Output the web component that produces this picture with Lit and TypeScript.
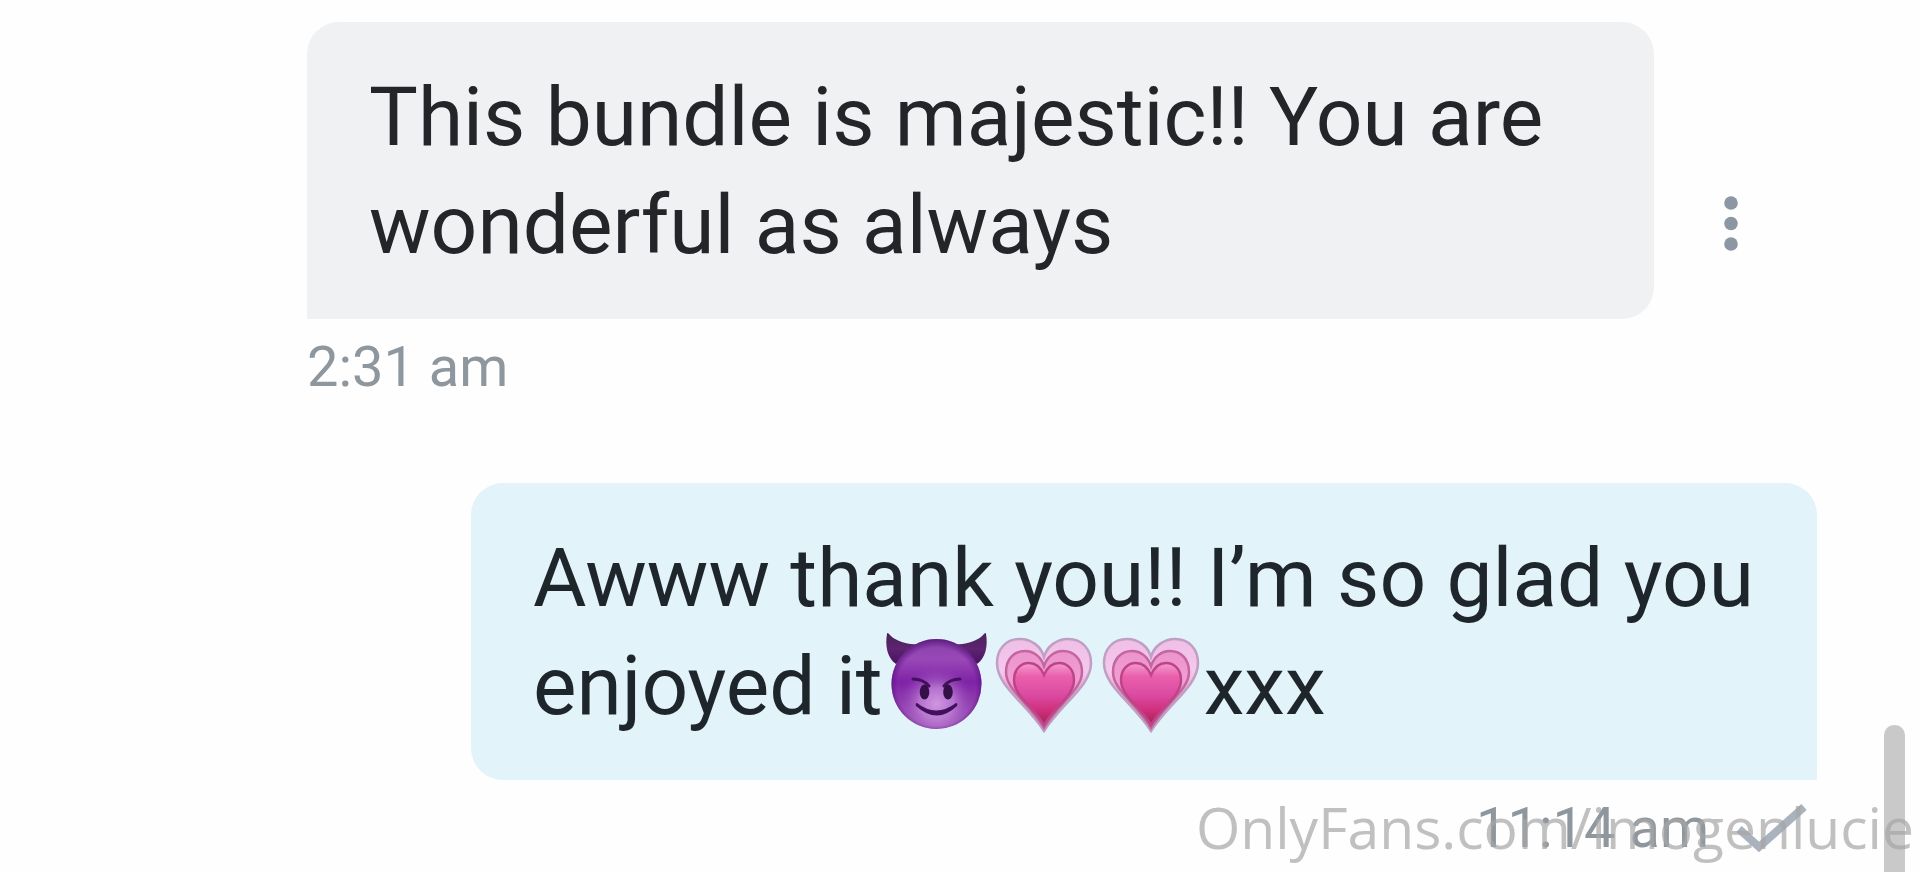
import { LitElement, html, css } from "lit";
import { customElement } from "lit/decorators.js";

const emojiStyles = css`
  :host { display: inline-block; flex: none; }
  .art { display: block; width: 107px; height: 108px; }
`;

@customElement("emoji-devil")
class EmojiDevil extends LitElement {
  static styles = emojiStyles;
  render() {
    return html`<svg class="art" viewBox="7 12 107 108" role="img" aria-label="😈">
      <defs>
        <linearGradient id="face" x1="0" y1="0" x2="0" y2="1">
          <stop offset="0" stop-color="#8640a3" /><stop offset=".22" stop-color="#9a48b8" />
          <stop offset=".48" stop-color="#7f22a6" /><stop offset="1" stop-color="#a864bd" />
        </linearGradient>
        <radialGradient id="glow" cx=".5" cy=".72" r=".42">
          <stop offset="0" stop-color="#cf96e0" /><stop offset=".45" stop-color="#bf80d6" stop-opacity=".8" />
          <stop offset="1" stop-color="#9040b4" stop-opacity="0" />
        </radialGradient>
        <radialGradient id="rim" cx=".5" cy=".53" r=".52">
          <stop offset=".84" stop-color="#4e0f78" stop-opacity="0" /><stop offset="1" stop-color="#4e0f78" stop-opacity=".65" />
        </radialGradient>
        <linearGradient id="horn" x1="0" y1="0" x2="0" y2="1">
          <stop offset="0" stop-color="#4a2158" /><stop offset=".5" stop-color="#5d2470" /><stop offset="1" stop-color="#4a1262" />
        </linearGradient>
      </defs>
      <path fill="url(#horn)" d="M11 14C9 25 11 38 20 44L42 24C29 25 18 20 13 14Q11 12 11 14Z" />
      <path fill="url(#horn)" d="M110 14C112 25 110 38 101 44L79 24C92 25 103 20 108 14Q110 12 110 14Z" />
      <circle cx="60.500" cy="64" r="45" fill="url(#face)" />
      <circle cx="60.500" cy="64" r="45" fill="url(#glow)" />
      <circle cx="60.500" cy="64" r="45" fill="url(#rim)" />
      <g fill="none" stroke="#42105c" stroke-width="3" stroke-linecap="round">
        <path d="M37 59Q47 59 53 66" /><path d="M84 59Q74 59 68 66" />
      </g>
      <ellipse cx="48.500" cy="72" rx="4.800" ry="7.500" fill="#351048" />
      <ellipse cx="72" cy="72" rx="4.800" ry="7.500" fill="#351048" />
      <path fill="#42105c" d="M41 83Q60 98 80 83Q82 83 81 86Q61 105 40 86Q39 83 41 83Z" />
    </svg>`;
  }
}

@customElement("emoji-heart")
class EmojiHeart extends LitElement {
  static styles = emojiStyles;
  render() {
    return html`<svg class="art" viewBox="1 12 107 108" role="img" aria-label="💗">
      <defs>
        <linearGradient id="outer" x1="0" y1="0" x2="0" y2="1">
          <stop offset="0" stop-color="#efbfe6" /><stop offset=".35" stop-color="#f5c8ee" />
          <stop offset=".7" stop-color="#e08fba" /><stop offset="1" stop-color="#b98ba9" />
        </linearGradient>
        <linearGradient id="mid" x1="0" y1="0" x2="0" y2="1">
          <stop offset="0" stop-color="#eb93cd" /><stop offset=".4" stop-color="#f29fd4" />
          <stop offset=".75" stop-color="#cf5a93" /><stop offset="1" stop-color="#a9416f" />
        </linearGradient>
        <linearGradient id="inner" x1="0" y1="0" x2="0" y2="1">
          <stop offset="0" stop-color="#f49bd0" /><stop offset=".22" stop-color="#ea5fab" />
          <stop offset=".5" stop-color="#dc4ca3" /><stop offset=".75" stop-color="#d0317f" /><stop offset="1" stop-color="#a52151" />
        </linearGradient>
      </defs>
      <path fill="url(#outer)" stroke="#c09fc4" stroke-width="2.500" d="M55 37C52 26 42 19 31 19C17 19 8 29 8 43C8 66 36 82 55 111C74 82 102 66 102 43C102 29 93 19 79 19C68 19 58 26 55 37Z" />
      <path fill="url(#mid)" stroke="#c3659f" stroke-width="2.500" d="M55 46C52 37 45 31 36 31C25 31 17 39 17 52C17 70 40 82 55 108C70 82 93 70 93 52C93 39 85 31 74 31C65 31 58 37 55 46Z" />
      <path fill="url(#inner)" stroke="#bd4487" stroke-width="2.500" d="M55 55C52 48 47 43 40 43C31 43 25 50 25 60C25 76 44 86 55 105C66 86 85 76 85 60C85 50 79 43 70 43C63 43 58 48 55 55Z" />
    </svg>`;
  }
}

@customElement("app-root")
class AppRoot extends LitElement {
  static styles = css`
    :host { display: block; font-family: Roboto, "Liberation Sans", sans-serif; background: #fefefe; }
    .page { position: relative; box-sizing: border-box; min-height: 100vh; overflow: hidden; padding: 22px 103px 0 307px; }
    .thread { display: flex; flex-direction: column; gap: 84px; }
    .row { display: flex; }
    .row.out { padding-left: 164px; }
    .bubble { flex: 1; box-sizing: border-box; margin: 0; padding: 41px 56px 40px 62px; font-size: 82px; line-height: 108px; color: #232529; }
    .in .bubble { background: #f0f1f3; border-radius: 32px 32px 32px 0; }
    .out .bubble { background: #e2f3fa; color: #1f262b; border-radius: 32px 32px 0 32px; }
    .line { display: flex; align-items: center; height: 108px; }
    .emojis { display: flex; }
    .menu { flex: none; width: 163px; padding: 106px 10px 0 0; border: 0; background: none; }
    .dots { display: block; width: 14px; height: 55px; margin: 0 auto; }
    .meta { display: flex; align-items: center; gap: 28px; margin-top: 16px; font-size: 56px; line-height: 64px; color: #8f979e; }
    .meta.out { justify-content: flex-end; gap: 26px; padding-right: 8px; }
    .check { width: 74px; height: 52px; }
    .watermark { position: absolute; right: 6px; bottom: 6px; font: 57px/78px "Open Sans", "Noto Sans", sans-serif; color: rgba(165, 165, 165, 0.7); white-space: nowrap; }
    .thumb { position: absolute; right: 15px; bottom: 0; width: 21px; height: 147px; border-radius: 10px 10px 0 0; background: #c9c9c9; }
  `;
  render() {
    return html`<main class="page">
      <div class="thread">
        <section>
          <div class="row in">
            <p class="bubble">This bundle is majestic!! You are wonderful as always</p>
            <button class="menu" aria-label="Message options">
              <svg class="dots" viewBox="0 0 14 55" fill="#8d97a3"><circle cx="7" cy="7" r="6.800" /><circle cx="7" cy="27.500" r="6.800" /><circle cx="7" cy="48" r="6.800" /></svg>
            </button>
          </div>
          <div class="meta"><time>2:31 am</time></div>
        </section>
        <section>
          <div class="row out">
            <p class="bubble">Awww thank you!! I’m so glad you <span class="line">enjoyed it<span class="emojis"><emoji-devil></emoji-devil><emoji-heart></emoji-heart><emoji-heart></emoji-heart></span>xxx</span></p>
          </div>
          <div class="meta out">
            <time>11:14 am</time>
            <svg class="check" viewBox="0 0 74 52" role="img" aria-label="Delivered"><path d="M4 27L24 45L69 5" fill="none" stroke="#aab3bd" stroke-width="8" /></svg>
          </div>
        </section>
      </div>
      <div class="thumb"></div>
      <div class="watermark">OnlyFans.com/imogenlucie</div>
    </main>`;
  }
}
